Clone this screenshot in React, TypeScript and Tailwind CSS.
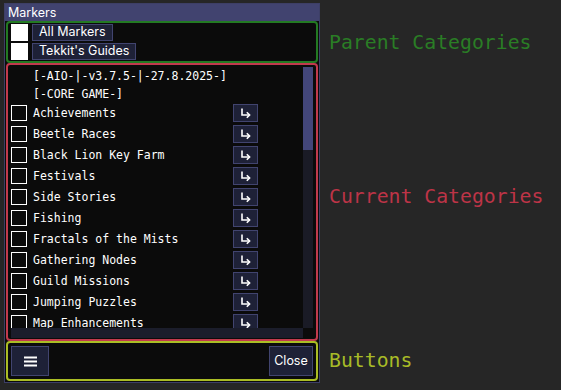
import React from "react";

const categories = [
  "Achievements",
  "Beetle Races",
  "Black Lion Key Farm",
  "Festivals",
  "Side Stories",
  "Fishing",
  "Fractals of the Mists",
  "Gathering Nodes",
  "Guild Missions",
  "Jumping Puzzles",
  "Map Enhancements",
];

const mono = "font-['DejaVu_Sans_Mono',monospace]";
const sans = "font-['Inter','Noto_Sans',sans-serif]";

const Hamburger = () => (
  <svg width="13" height="11" viewBox="0 0 13 11">
    <rect x="0" y="0.5" width="13" height="2" fill="#fff" />
    <rect x="0" y="4.5" width="13" height="2" fill="#fff" />
    <rect x="0" y="8.5" width="13" height="2" fill="#fff" />
  </svg>
);

const ArrowDownRight = () => (
  <svg width="11" height="11" viewBox="0 0 11 11" fill="none" stroke="#fff" strokeWidth="1.6">
    <path d="M2 0.5 V7 H9.5" />
    <path d="M6.8 4.2 L9.6 7 L6.8 9.8" />
  </svg>
);

const CategoryRow = ({ name }: { name: string }) => (
  <div className="flex items-center h-[18px] shrink-0">
    <div className="w-[16px] h-[16px] border border-white shrink-0" />
    <span className={`ml-[6px] w-[200px] shrink-0 text-white text-[11.5px] leading-[18px] whitespace-nowrap ${mono}`}>
      {name}
    </span>
    <button className="w-[25px] h-[18px] shrink-0 flex items-center justify-center bg-[#1e2137] border border-[#41446f]">
      <ArrowDownRight />
    </button>
  </div>
);

export default function App() {
  return (
    <div className="w-[561px] h-[390px] bg-[#262626] flex pt-[3px] pl-[4px] overflow-hidden">
      <div className="w-[316px] h-[380px] border border-[#3d3f66] bg-[#0b0b0b] flex flex-col shrink-0">
        <div className={`h-[17px] bg-[#41436f] text-white text-[12.5px] leading-[17px] pl-[3px] ${sans}`}>
          Markers
        </div>
        <div className="flex flex-col px-px">
          {/* parent categories */}
          <div className="h-[42px] border-2 border-[#237a23] rounded-[4px] flex flex-col gap-[2px] pt-px pl-[3px]">
            {["All Markers", "Tekkit's Guides"].map((label) => (
              <div key={label} className="flex items-center h-[17px]">
                <div className="w-[17px] h-[17px] bg-white shrink-0" />
                <button
                  className={`ml-[4px] h-[17px] px-[6px] bg-[#1e2137] border border-[#41446f] text-white text-[12.5px] leading-none ${sans}`}
                >
                  {label}
                </button>
              </div>
            ))}
          </div>

          {/* current categories */}
          <div className="h-[278px] border-2 border-[#c23a4d] rounded-[4px] pt-[2px] pl-[3px] pr-[3px] pb-px">
            <div className="grid grid-cols-[292px_10px] grid-rows-[261px_10px] h-full">
              <div className="overflow-hidden flex flex-col">
                <div className={`pl-[22px] h-[18px] leading-[18px] text-white text-[11.5px] shrink-0 ${mono}`}>
                  [-AIO-|-v3.7.5-|-27.8.2025-]
                </div>
                <div className={`pl-[22px] h-[18px] leading-[18px] text-white text-[11.5px] shrink-0 ${mono}`}>
                  [-CORE GAME-]
                </div>
                <div className="flex flex-col gap-[3px] mt-px">
                  {categories.map((c) => (
                    <CategoryRow key={c} name={c} />
                  ))}
                </div>
              </div>
              <div className="bg-[#1a1b26] flex flex-col">
                <div className="h-[83px] bg-[#43467a]" />
              </div>
              <div className="bg-[#1b1d2b]" />
              <div />
            </div>
          </div>

          {/* buttons */}
          <div className="h-[40px] border-2 border-[#abbd25] rounded-[4px] flex items-center justify-between px-[3px]">
            <button className="w-[38px] h-[30px] bg-[#1e2137] border border-[#41446f] flex items-center justify-center">
              <Hamburger />
            </button>
            <button className={`w-[44px] h-[30px] bg-[#1e2137] border border-[#41446f] text-white text-[12.5px] ${sans}`}>
              Close
            </button>
          </div>
        </div>
      </div>

      <div className={`flex flex-col ml-[9px] ${mono} text-[19.8px] leading-[20px]`}>
        <div className="mt-[30px] text-[#2a7d25]">Parent Categories</div>
        <div className="mt-[134px] text-[#bd3447]">Current Categories</div>
        <div className="mt-[144px] text-[#a8bb27]">Buttons</div>
      </div>
    </div>
  );
}
